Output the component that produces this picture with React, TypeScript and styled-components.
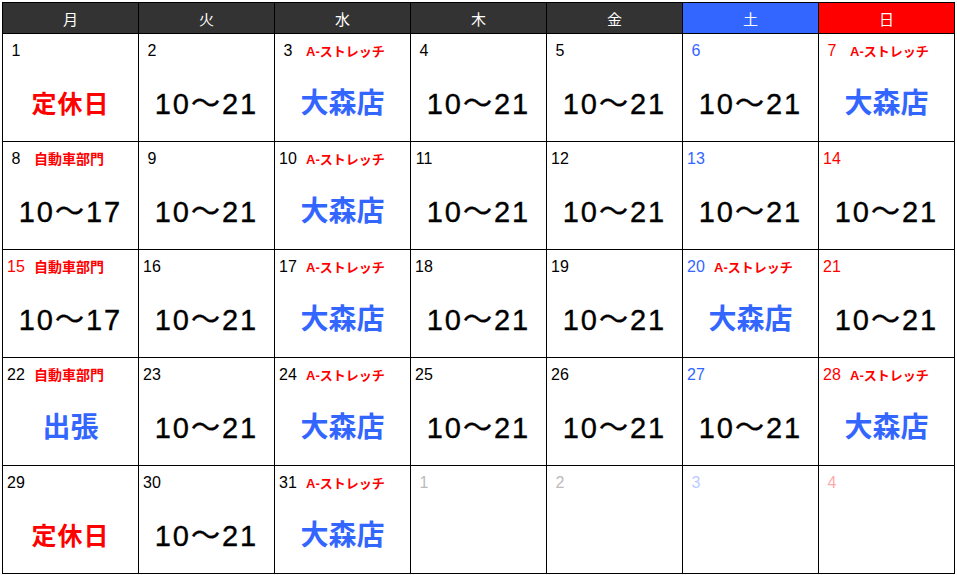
import React from "react";
import styled, { createGlobalStyle } from "styled-components";

const Global = createGlobalStyle`
  html, body { margin: 0; padding: 0; background: #fff; }
  body { font-family: "Liberation Sans", "Noto Sans CJK JP", sans-serif; }
`;

const Page = styled.div`
  padding: 2px;
`;

const Calendar = styled.div`
  display: grid;
  grid-template-columns: repeat(7, 135px);
  grid-template-rows: 30px repeat(5, 107px);
  gap: 1px;
  padding: 1px;
  background: #000;
  width: max-content;
`;

const HeadCell = styled.div<{ $bg: string }>`
  background: ${(p) => p.$bg};
  color: #fff;
  font-size: 15px;
  display: flex;
  align-items: center;
  justify-content: center;
  font-family: "Noto Sans CJK JP", sans-serif;
`;

const DayCell = styled.div`
  background: #fff;
  display: flex;
  flex-direction: column;
`;

const TopRow = styled.div`
  height: 30px;
  box-sizing: border-box;
  padding: 7px 0 0 3px;
  display: flex;
  align-items: baseline;
  line-height: 20px;
`;

const DayNum = styled.span<{ $color: string }>`
  width: 20px;
  text-align: center;
  font-size: 16px;
  color: ${(p) => p.$color};
  font-family: "Liberation Sans", sans-serif;
`;

const Tag = styled.span<{ $size: number }>`
  margin-left: 8px;
  font-size: ${(p) => p.$size}px;
  font-weight: 700;
  color: #ff0000;
  font-family: "Liberation Sans", "Noto Sans CJK JP", sans-serif;
`;

type Kind = "time" | "word" | "closed";

const Main = styled.div<{ $color: string; $kind: Kind }>`
  flex: 1;
  display: flex;
  align-items: center;
  justify-content: center;
  padding-top: 3px;
  line-height: 1;
  color: ${(p) => p.$color};
  font-size: ${(p) => (p.$kind === "time" ? 29 : p.$kind === "closed" ? 25 : 28)}px;
  font-weight: ${(p) => (p.$kind === "time" ? 400 : 700)};
  letter-spacing: ${(p) => (p.$kind === "time" ? 2 : p.$kind === "closed" ? 1 : 0)}px;
  -webkit-text-stroke: ${(p) => (p.$kind === "time" ? "0.35px" : "0")} currentColor;
  font-family: "Liberation Sans", "Noto Sans CJK JP", sans-serif;
`;

const RED = "#ff0000";
const BLUE = "#3366ff";
const BLACK = "#000000";

const heads: [string, string][] = [
  ["月", "#333333"],
  ["火", "#333333"],
  ["水", "#333333"],
  ["木", "#333333"],
  ["金", "#333333"],
  ["土", BLUE],
  ["日", RED],
];

type Day = { n: number; c: string; tag?: string; main?: string; mc?: string };

const A = "A-ストレッチ";
const J = "自動車部門";
const T21 = "10～21";
const T17 = "10～17";
const OM = "大森店";
const OFF = "定休日";

const days: Day[] = [
  { n: 1, c: BLACK, main: OFF, mc: RED },
  { n: 2, c: BLACK, main: T21 },
  { n: 3, c: BLACK, tag: A, main: OM, mc: BLUE },
  { n: 4, c: BLACK, main: T21 },
  { n: 5, c: BLACK, main: T21 },
  { n: 6, c: BLUE, main: T21 },
  { n: 7, c: RED, tag: A, main: OM, mc: BLUE },

  { n: 8, c: BLACK, tag: J, main: T17 },
  { n: 9, c: BLACK, main: T21 },
  { n: 10, c: BLACK, tag: A, main: OM, mc: BLUE },
  { n: 11, c: BLACK, main: T21 },
  { n: 12, c: BLACK, main: T21 },
  { n: 13, c: BLUE, main: T21 },
  { n: 14, c: RED, main: T21 },

  { n: 15, c: RED, tag: J, main: T17 },
  { n: 16, c: BLACK, main: T21 },
  { n: 17, c: BLACK, tag: A, main: OM, mc: BLUE },
  { n: 18, c: BLACK, main: T21 },
  { n: 19, c: BLACK, main: T21 },
  { n: 20, c: BLUE, tag: A, main: OM, mc: BLUE },
  { n: 21, c: RED, main: T21 },

  { n: 22, c: BLACK, tag: J, main: "出張", mc: BLUE },
  { n: 23, c: BLACK, main: T21 },
  { n: 24, c: BLACK, tag: A, main: OM, mc: BLUE },
  { n: 25, c: BLACK, main: T21 },
  { n: 26, c: BLACK, main: T21 },
  { n: 27, c: BLUE, main: T21 },
  { n: 28, c: RED, tag: A, main: OM, mc: BLUE },

  { n: 29, c: BLACK, main: OFF, mc: RED },
  { n: 30, c: BLACK, main: T21 },
  { n: 31, c: BLACK, tag: A, main: OM, mc: BLUE },
  { n: 1, c: "#bbbbbb" },
  { n: 2, c: "#bbbbbb" },
  { n: 3, c: "#bbccff" },
  { n: 4, c: "#ffaaaa" },
];

const kindOf = (s: string): Kind =>
  /^[0-9～]+$/.test(s) ? "time" : s === OFF ? "closed" : "word";

export default function App() {
  return (
    <>
      <Global />
      <Page>
        <Calendar>
          {heads.map(([h, bg]) => (
            <HeadCell key={h} $bg={bg}>
              {h}
            </HeadCell>
          ))}
          {days.map((d, i) => (
            <DayCell key={i}>
              <TopRow>
                <DayNum $color={d.c}>{d.n}</DayNum>
                {d.tag && <Tag $size={d.tag === J ? 14 : 13}>{d.tag}</Tag>}
              </TopRow>
              {d.main && (
                <Main $color={d.mc ?? BLACK} $kind={kindOf(d.main)}>
                  {d.main}
                </Main>
              )}
            </DayCell>
          ))}
        </Calendar>
      </Page>
    </>
  );
}
